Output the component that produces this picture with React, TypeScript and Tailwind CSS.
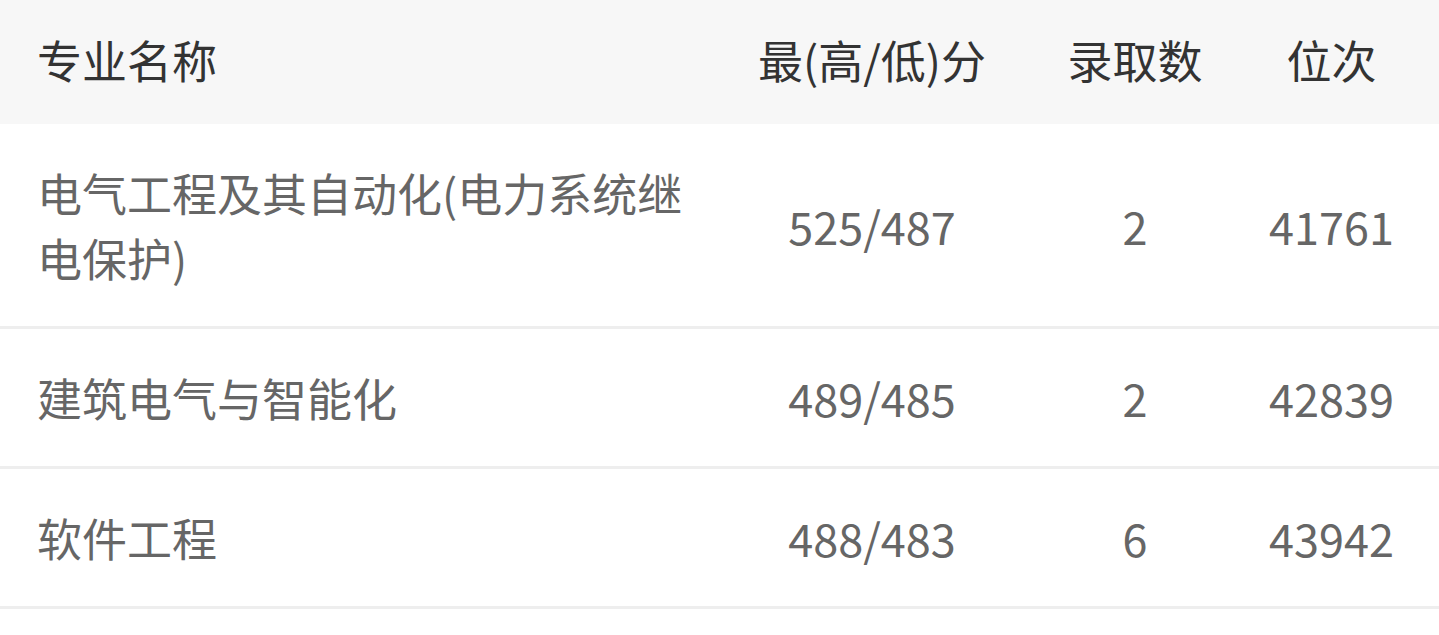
import React from 'react';

type Row = { name: string; score: string; count: string; rank: string };

const rows: Row[] = [
  { name: '电气工程及其自动化(电力系统继电保护)', score: '525/487', count: '2', rank: '41761' },
  { name: '建筑电气与智能化', score: '489/485', count: '2', rank: '42839' },
  { name: '软件工程', score: '488/483', count: '6', rank: '43942' },
];

const font = { fontFamily: '"Noto Sans CJK SC", "Noto Sans", sans-serif' };

const App = () => {
  return (
    <div className="w-[1439px] h-[635px] bg-white overflow-hidden" style={font}>
      <div className="grid grid-cols-[720px_304px_222px_193px] h-[124px] items-center pb-[5px] bg-[#f7f7f7] text-[45px] text-[#333]">
        <div className="pl-[37px]">专业名称</div>
        <div className="text-center">最(高/低)分</div>
        <div className="text-center">录取数</div>
        <div className="text-center pr-[22px]">位次</div>
      </div>
      {rows.map((r, i) => (
        <div
          key={i}
          className="grid grid-cols-[720px_304px_222px_193px] items-center border-b-[3px] border-[#eeeeee] py-[36px] text-[45px] leading-[65px] text-[#666]"
        >
          <div className="pl-[37px] pr-[10px]">{r.name}</div>
          <div className="text-center">{r.score}</div>
          <div className="text-center">{r.count}</div>
          <div className="text-center pr-[22px]">{r.rank}</div>
        </div>
      ))}
    </div>
  );
};

export default App;
